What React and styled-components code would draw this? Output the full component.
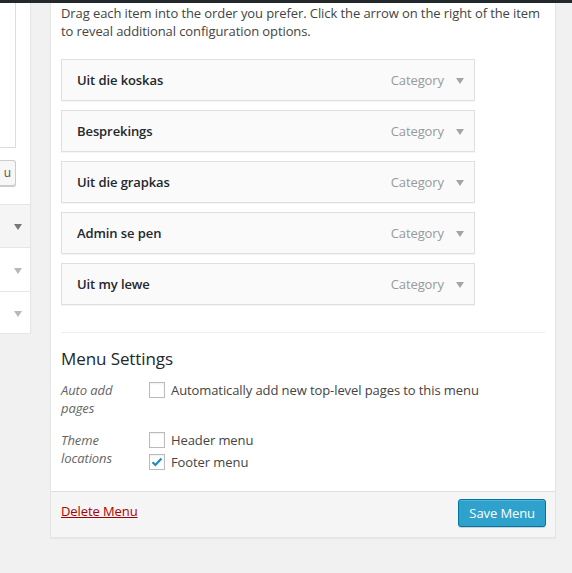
import React from "react";
import styled, { createGlobalStyle } from "styled-components";

const GlobalStyle = createGlobalStyle`
  body {
    margin: 0;
    background: #f1f1f1;
    font-family: "Open Sans", "Liberation Sans", sans-serif;
    font-size: 13px;
    letter-spacing: -0.09px;
    color: #444;
  }
`;

const items = [
  "Uit die koskas",
  "Besprekings",
  "Uit die grapkas",
  "Admin se pen",
  "Uit my lewe",
];

const Page = styled.div`
  width: 572px;
  height: 573px;
  overflow: hidden;
`;

const TopBar = styled.div`
  height: 3px;
  background: #23282d;
`;

const Columns = styled.div`
  display: flex;
  align-items: flex-start;
`;

const Side = styled.div`
  width: 30px;
  background: #fff;
  border-right: 1px solid #e5e5e5;
  box-shadow: 0 1px 1px rgba(0, 0, 0, 0.04);
  margin-right: 19px;
`;

const SideBox = styled.div`
  height: 145px;
  width: 16px;
  border: 1px solid #ddd;
  border-left: none;
  border-top: none;
  box-sizing: border-box;
`;

const SideButton = styled.div`
  margin-top: 12px;
  width: 16px;
  height: 26px;
  box-sizing: border-box;
  border: 1px solid #ccc;
  border-left: none;
  border-radius: 0 3px 3px 0;
  background: #f7f7f7;
  box-shadow: 0 1px 0 #ccc;
  font-size: 12px;
  line-height: 24px;
  color: #555;
  text-align: right;
  padding-right: 4px;
  overflow: hidden;
`;

const SideRows = styled.div`
  margin-top: 18px;
  border-top: 1px solid #e5e5e5;
`;

const SideRow = styled.div`
  height: ${(p) => p.h}px;
  background: ${(p) => (p.open ? "#f5f5f5" : "#fff")};
  border-bottom: 1px solid #e5e5e5;
  display: flex;
  align-items: center;
  justify-content: flex-end;
  padding-right: 8px;
  box-sizing: border-box;
  &:last-child {
    border-bottom: none;
  }
`;

const Arrow = styled.span`
  width: 0;
  height: 0;
  border-left: 4px solid transparent;
  border-right: 4px solid transparent;
  border-top: 6px solid ${(p) => p.c || "#b4b9be"};
  margin-top: 2px;
`;

const Main = styled.div`
  width: 506px;
  background: #fff;
  border: 1px solid #e5e5e5;
  border-top: none;
  box-sizing: border-box;
  box-shadow: 0 1px 1px rgba(0, 0, 0, 0.04);
`;

const Body = styled.div`
  padding: 0 10px;
`;

const Intro = styled.p`
  margin: 1px 0 0;
  line-height: 18px;
  color: #444;
`;

const List = styled.div`
  margin-top: 19px;
  display: flex;
  flex-direction: column;
  gap: 9px;
  width: 414px;
`;

const Item = styled.div`
  height: 42px;
  box-sizing: border-box;
  border: 1px solid #dfdfdf;
  background: #fafafa;
  display: flex;
  align-items: center;
  padding: 0 10px 0 15px;
  box-shadow: 0 1px 1px rgba(0, 0, 0, 0.04);
`;

const ItemTitle = styled.span`
  flex: 1;
  font-weight: 600;
  color: #23282d;
`;

const ItemType = styled.span`
  color: #999;
  margin-right: 12px;
`;

const Divider = styled.div`
  margin-top: 27px;
  border-top: 1px solid #eee;
`;

const Heading = styled.h3`
  margin: 14px 0 10px;
  font-size: 17px;
  font-weight: 400;
  color: #23282d;
  line-height: 24px;
`;

const SettingRow = styled.div`
  display: flex;
  margin-bottom: ${(p) => p.mb || 0}px;
`;

const SettingLabel = styled.div`
  width: 88px;
  padding-right: 20px;
  box-sizing: border-box;
  font-style: italic;
  color: #666;
  line-height: 18px;
`;

const Options = styled.div`
  display: flex;
  flex-direction: column;
  gap: 4px;
`;

const Option = styled.label`
  display: flex;
  align-items: center;
  height: 18px;
  color: #444;
`;

const Box = styled.span`
  width: 16px;
  height: 16px;
  box-sizing: border-box;
  border: 1px solid #bbb;
  background: #fff;
  box-shadow: inset 0 1px 2px rgba(0, 0, 0, 0.07);
  margin-right: 6px;
  display: flex;
  align-items: center;
  justify-content: center;
`;

const Footer = styled.div`
  margin-top: 20px;
  height: 46px;
  box-sizing: border-box;
  border-top: 1px solid #dedede;
  background: #f5f5f5;
  display: flex;
  align-items: flex-start;
  justify-content: space-between;
  padding: 7px 9px 0 10px;
`;

const DeleteLink = styled.a`
  color: #a00;
  text-decoration: underline;
  line-height: 18px;
  margin-top: 3px;
`;

const SaveButton = styled.button`
  height: 28px;
  padding: 0 10px;
  font-family: inherit;
  font-size: 13px;
  letter-spacing: inherit;
  color: #fff;
  background: #2ea2cc;
  border: 1px solid #0074a2;
  border-radius: 3px;
  box-shadow: inset 0 1px 0 rgba(120, 200, 230, 0.5), 0 1px 0 rgba(0, 0, 0, 0.15);
`;

const Check = () => (
  <svg width="12" height="10" viewBox="0 0 12 10">
    <path d="M1.5 5.2 L4.4 8 L10.5 1.5" fill="none" stroke="#1e8cbe" strokeWidth="2.2" />
  </svg>
);

export default function App() {
  return (
    <Page>
      <GlobalStyle />
      <TopBar />
      <Columns>
        <Side>
          <SideBox />
          <SideButton>u</SideButton>
          <SideRows>
            <SideRow h={43} open>
              <Arrow c="#777" />
            </SideRow>
            <SideRow h={44}>
              <Arrow />
            </SideRow>
            <SideRow h={41}>
              <Arrow />
            </SideRow>
          </SideRows>
        </Side>
        <Main>
          <Body>
            <Intro>
              Drag each item into the order you prefer. Click the arrow on the right of the item to
              reveal additional configuration options.
            </Intro>
            <List>
              {items.map((name) => (
                <Item key={name}>
                  <ItemTitle>{name}</ItemTitle>
                  <ItemType>Category</ItemType>
                  <Arrow c="#a0a5aa" />
                </Item>
              ))}
            </List>
            <Divider />
            <Heading>Menu Settings</Heading>
            <SettingRow mb={14}>
              <SettingLabel>Auto add pages</SettingLabel>
              <Options>
                <Option>
                  <Box />
                  Automatically add new top-level pages to this menu
                </Option>
              </Options>
            </SettingRow>
            <SettingRow>
              <SettingLabel>Theme locations</SettingLabel>
              <Options>
                <Option>
                  <Box />
                  Header menu
                </Option>
                <Option>
                  <Box>
                    <Check />
                  </Box>
                  Footer menu
                </Option>
              </Options>
            </SettingRow>
          </Body>
          <Footer>
            <DeleteLink href="#">Delete Menu</DeleteLink>
            <SaveButton>Save Menu</SaveButton>
          </Footer>
        </Main>
      </Columns>
    </Page>
  );
}
